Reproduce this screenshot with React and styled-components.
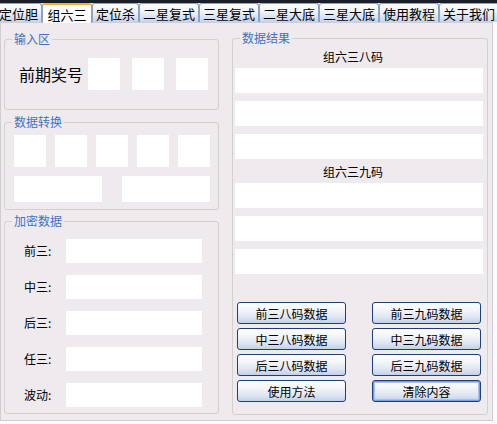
import styled, { createGlobalStyle } from 'styled-components'

const GlobalStyle = createGlobalStyle`
	* { box-sizing: border-box; }
	body {
		margin: 0;
		background: #fbfbfd;
		font-family: "Noto Sans CJK SC", "DejaVu Sans", sans-serif;
		color: #000;
	}
`

const Window = styled.div`
	width: 497px;
	height: 424px;
	overflow: hidden;
	background: #fbfbfd;
`

const TopStrip = styled.div`
	height: 3px;
	background: #1b1f2c;
`

const TabBar = styled.div`
	display: flex;
	height: 19px;
	margin-left: -5px;
	background: #eeeaee;
`

const Tab = styled.div`
	flex: none;
	width: ${p => p.$w}px;
	display: flex;
	align-items: center;
	justify-content: center;
	font-size: 13px;
	line-height: 13px;
	border: 1px solid #8fa3bd;
	border-bottom: none;
	border-radius: 3px 3px 0 0;
	background: ${p => p.$active
		? '#ffffff'
		: 'linear-gradient(to bottom, #ffffff 0%, #eef2f9 45%, #c4d3ec 100%)'};
	border-top: ${p => p.$active ? '2px solid #f0b43c' : '1px solid #8fa3bd'};
	height: ${p => p.$active ? 20 : 19}px;
	position: relative;
	z-index: ${p => p.$active ? 1 : 0};
`

const Page = styled.div`
	width: 493px;
	height: 399px;
	background: #eeeaee;
	border: 1px solid #cfccd2;
	display: flex;
	align-items: flex-start;
	gap: 13px;
	padding: 8px 0 0 3px;
`

const Column = styled.div`
	display: flex;
	flex-direction: column;
	width: 215px;
	margin-top: 1px;
`

const Group = styled.fieldset`
	margin: ${p => p.$gap || 0}px 0 0 0;
	padding: 0 0 ${p => p.$pb || 0}px 0;
	min-width: 0;
	width: ${p => p.$w || 215}px;
	border: 1px solid #d4d0cc;
	border-radius: 3px;
`

const Legend = styled.legend`
	margin-left: 7px;
	padding: 0 2px;
	font-size: 12px;
	line-height: 14px;
	color: #4073c4;
`

const WhiteBox = styled.div`
	flex: none;
	width: ${p => p.$w}px;
	height: ${p => p.$h}px;
	background: #ffffff;
`

const PrizeRow = styled.div`
	display: flex;
	align-items: center;
	margin-top: 12px;
	padding-left: 14px;
	gap: 12px;
`

const PrizeLabel = styled.span`
	font-size: 16px;
	line-height: 32px;
	width: 64px;
	margin-right: -7px;
`

const SpreadRow = styled.div`
	display: flex;
	justify-content: space-between;
	padding: 0 8px 0 9px;
	margin-top: ${p => p.$mt}px;
`

const FieldList = styled.div`
	display: flex;
	flex-direction: column;
	gap: 12px;
	margin-top: 11px;
	padding-left: 19px;
`

const FieldRow = styled.div`
	display: flex;
	align-items: center;
`

const FieldLabel = styled.span`
	width: 42px;
	font-size: 12px;
	line-height: 24px;
`

const ResultTitle = styled.div`
	height: ${p => p.$h}px;
	display: flex;
	align-items: center;
	justify-content: center;
	padding-right: 14px;
	font-size: 12px;
`

const ResultBoxes = styled.div`
	display: flex;
	flex-direction: column;
	gap: 8px;
	padding-left: 2px;
`

const ButtonGrid = styled.div`
	display: grid;
	grid-template-columns: 109px 109px;
	grid-auto-rows: 22px;
	column-gap: 26px;
	row-gap: 4px;
	margin-top: 28px;
	padding-left: 4px;
`

const Button = styled.button`
	font-family: inherit;
	font-size: 12px;
	color: #000;
	padding: 0;
	border: 1px solid #1f3f78;
	border-radius: 3px;
	background: linear-gradient(to bottom, #ffffff 0%, #f3f5fa 35%, #dfe6f2 70%, #c4d0e6 100%);
	box-shadow: ${p => p.$default ? 'inset 0 0 0 1px #7d9ddc, inset 0 0 0 2px #a9c0ec' : 'none'};
	cursor: pointer;
`

const tabs = [
	{ label: '定位胆', w: 47 },
	{ label: '组六三', w: 50, active: true },
	{ label: '定位杀', w: 47 },
	{ label: '二星复式', w: 60 },
	{ label: '三星复式', w: 60 },
	{ label: '二星大底', w: 60 },
	{ label: '三星大底', w: 60 },
	{ label: '使用教程', w: 60 },
	{ label: '关于我们', w: 60 },
]

const fields = ['前三:', '中三:', '后三:', '任三:', '波动:']

const buttons = [
	'前三八码数据', '前三九码数据',
	'中三八码数据', '中三九码数据',
	'后三八码数据', '后三九码数据',
	'使用方法', '清除内容',
]

export default function App() {
	return (
		<Window>
			<GlobalStyle />
			<TopStrip />
			<TabBar>
				{tabs.map(t => (
					<Tab key={t.label} $w={t.w} $active={t.active}>{t.label}</Tab>
				))}
			</TabBar>
			<Page>
				<Column>
					<Group $pb={19}>
						<Legend>输入区</Legend>
						<PrizeRow>
							<PrizeLabel>前期奖号</PrizeLabel>
							<WhiteBox $w={32} $h={32} />
							<WhiteBox $w={32} $h={32} />
							<WhiteBox $w={32} $h={32} />
						</PrizeRow>
					</Group>
					<Group $gap={5} $pb={7}>
						<Legend>数据转换</Legend>
						<SpreadRow $mt={6}>
							{[0, 1, 2, 3, 4].map(i => <WhiteBox key={i} $w={32} $h={32} />)}
						</SpreadRow>
						<SpreadRow $mt={9}>
							<WhiteBox $w={88} $h={26} />
							<WhiteBox $w={88} $h={26} />
						</SpreadRow>
					</Group>
					<Group $gap={4} $pb={6}>
						<Legend>加密数据</Legend>
						<FieldList>
							{fields.map(f => (
								<FieldRow key={f}>
									<FieldLabel>{f}</FieldLabel>
									<WhiteBox $w={136} $h={24} />
								</FieldRow>
							))}
						</FieldList>
					</Group>
				</Column>
				<Group $w={256} $pb={12}>
					<Legend>数据结果</Legend>
					<ResultTitle $h={23}>组六三八码</ResultTitle>
					<ResultBoxes>
						{[0, 1, 2].map(i => <WhiteBox key={i} $w={248} $h={25} />)}
					</ResultBoxes>
					<ResultTitle $h={24}>组六三九码</ResultTitle>
					<ResultBoxes>
						{[0, 1, 2].map(i => <WhiteBox key={i} $w={248} $h={25} />)}
					</ResultBoxes>
					<ButtonGrid>
						{buttons.map(b => (
							<Button key={b} $default={b === '清除内容'}>{b}</Button>
						))}
					</ButtonGrid>
				</Group>
			</Page>
		</Window>
	)
}
